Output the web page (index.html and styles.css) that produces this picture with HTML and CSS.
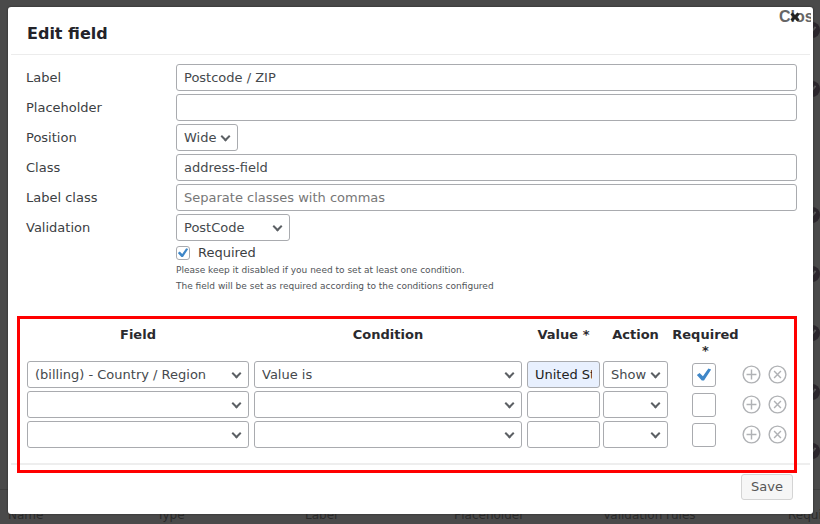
FILE: index.html
```html
<!DOCTYPE html>
<html lang="en">
<head>
<meta charset="utf-8">
<title>Edit field</title>
<meta name="viewport" content="width=device-width, initial-scale=1">
<link rel="stylesheet" href="styles.css">
</head>
<body>
<svg class="defs" aria-hidden="true">
  <symbol id="add" viewBox="0 0 20 20"><circle cx="10" cy="10" r="8.8"/><path d="M10 4.8v10.4M4.8 10h10.4"/></symbol>
  <symbol id="remove" viewBox="0 0 20 20"><circle cx="10" cy="10" r="8.8"/><path d="M6.4 6.4l7.2 7.2M13.6 6.4l-7.2 7.2"/></symbol>
  <symbol id="done" viewBox="0 0 18 18"><circle class="disc" cx="9" cy="9" r="9"/><path class="tick" d="M4.500 9l3 3.500 5.500-7"/></symbol>
</svg>

<div class="backdrop" aria-hidden="true">
  <div class="marks">
    <svg><use href="#done"/></svg>
    <svg><use href="#done"/></svg>
    <svg class="blank"></svg>
    <svg><use href="#done"/></svg>
    <svg><use href="#done"/></svg>
    <svg><use href="#done"/></svg>
    <svg><use href="#done"/></svg>
    <svg><use href="#done"/></svg>
  </div>
  <div class="columns">
    <span>Name</span><span>Type</span><span>Label</span><span>Placeholder</span><span>Validation rules</span><span>Required</span>
  </div>
</div>

<form class="dialog" role="dialog" aria-labelledby="title">
  <header class="dialog-head">
    <h1 id="title">Edit field</h1>
    <button type="button" class="close"><span>Close</span><svg viewBox="0 0 10 10" aria-hidden="true"><path d="M1.500 1.500l7 7M8.500 1.500l-7 7"/></svg></button>
  </header>

  <div class="dialog-body">
    <div class="fields">
      <label for="label">Label</label>
      <input class="control" id="label" type="text" value="Postcode / ZIP">
      <label for="placeholder">Placeholder</label>
      <input class="control" id="placeholder" type="text">
      <label for="position">Position</label>
      <div class="select position"><select class="control" id="position"><option>Wide</option></select></div>
      <label for="class">Class</label>
      <input class="control" id="class" type="text" value="address-field">
      <label for="label-class">Label class</label>
      <input class="control" id="label-class" type="text" placeholder="Separate classes with commas">
      <label for="validation">Validation</label>
      <div class="select validation"><select class="control" id="validation"><option>PostCode</option></select></div>
      <div class="required">
        <label class="check-row"><input class="check" type="checkbox" checked>Required</label>
        <p>Please keep it disabled if you need to set at least one condition.</p>
        <p>The field will be set as required according to the conditions configured</p>
      </div>
    </div>

    <div class="conditions">
      <table>
        <colgroup><col class="c-field"><col class="c-condition"><col class="c-value"><col class="c-action"><col class="c-required"><col class="c-tools"></colgroup>
        <thead>
          <tr><th>Field</th><th>Condition</th><th>Value *</th><th>Action</th><th>Required *</th><td></td></tr>
        </thead>
        <tbody>
          <tr>
            <td><div class="select"><select class="control" aria-label="Field"><option>(billing) - Country / Region</option></select></div></td>
            <td><div class="select"><select class="control" aria-label="Condition"><option>Value is</option></select></div></td>
            <td><input class="control filled" type="text" aria-label="Value" value="United States"></td>
            <td><div class="select"><select class="control" aria-label="Action"><option>Show</option></select></div></td>
            <td class="center"><input class="check large" type="checkbox" aria-label="Required" checked></td>
            <td><div class="tools"><button type="button" aria-label="Add"><svg><use href="#add"/></svg></button><button type="button" aria-label="Remove"><svg><use href="#remove"/></svg></button></div></td>
          </tr>
          <tr>
            <td><div class="select"><select class="control" aria-label="Field"><option></option></select></div></td>
            <td><div class="select"><select class="control" aria-label="Condition"><option></option></select></div></td>
            <td><input class="control" type="text" aria-label="Value"></td>
            <td><div class="select"><select class="control" aria-label="Action"><option></option></select></div></td>
            <td class="center"><input class="check large" type="checkbox" aria-label="Required"></td>
            <td><div class="tools"><button type="button" aria-label="Add"><svg><use href="#add"/></svg></button><button type="button" aria-label="Remove"><svg><use href="#remove"/></svg></button></div></td>
          </tr>
          <tr>
            <td><div class="select"><select class="control" aria-label="Field"><option></option></select></div></td>
            <td><div class="select"><select class="control" aria-label="Condition"><option></option></select></div></td>
            <td><input class="control" type="text" aria-label="Value"></td>
            <td><div class="select"><select class="control" aria-label="Action"><option></option></select></div></td>
            <td class="center"><input class="check large" type="checkbox" aria-label="Required"></td>
            <td><div class="tools"><button type="button" aria-label="Add"><svg><use href="#add"/></svg></button><button type="button" aria-label="Remove"><svg><use href="#remove"/></svg></button></div></td>
          </tr>
        </tbody>
      </table>
    </div>
  </div>

  <footer class="dialog-foot"><button type="submit" class="save">Save</button></footer>
</form>
</body>
</html>
```
FILE: styles.css
```css
*, *::after { box-sizing: border-box; }

body {
  margin: 0;
  padding: 7px 7px 9px 8px;
  background: #4a4a4a;
  color: #3c4043;
  font: 13px/16px "DejaVu Sans", Verdana, sans-serif;
  overflow: hidden;
}

.defs { position: absolute; width: 0; height: 0; }

/* Page dimmed behind the dialog */
.backdrop { position: absolute; inset: 0; overflow: hidden; }
.marks {
  position: absolute;
  top: 22px;
  right: 0;
  display: grid;
  gap: 43px;
}
.marks svg { display: block; width: 16px; height: 16px; }
.marks .blank { height: 24px; }
.disc { fill: #2b262c; }
.tick { fill: none; stroke: #5a5a5a; stroke-width: 2; }
.columns {
  position: absolute;
  top: 489px;
  left: 0;
  right: 0;
  display: grid;
  grid-template-columns: 149fr 148fr 149fr 149fr 185fr 32fr;
  padding: 17px 0 0 8px;
  border-top: 1px solid #3f3f3f;
  color: #2a2a2a;
  font-size: 12px;
  white-space: nowrap;
}
.columns span { min-width: 0; }

.dialog {
  position: relative;
  padding: 0 3px;
  border-radius: 3px;
  background: #fff;
  box-shadow: 0 0 2px #222;
}

.dialog-head {
  display: flex;
  align-items: center;
  height: 48px;
  padding: 6px 16px 0;
  border-bottom: 1px solid #ececec;
}
h1 { margin: 0; color: #23232a; font-size: 16px; line-height: 20px; }

.close {
  position: absolute;
  top: 0;
  right: 2px;
  width: 32px;
  height: 20px;
  padding: 0;
  border: 0;
  overflow: hidden;
  background: none;
  color: #666;
  font: bold 16px/20px "Liberation Sans", Arial, sans-serif;
  text-align: left;
}
.close svg {
  position: absolute;
  top: 5px;
  left: 11px;
  width: 10px;
  height: 10px;
  fill: none;
  stroke: #222;
  stroke-width: 3;
}

.dialog-body { padding: 9px 13px 0 15px; }

.fields {
  display: grid;
  grid-template-columns: 147px 1fr;
  gap: 3px;
  align-items: center;
}

.control {
  display: block;
  width: 100%;
  height: 27px;
  margin: 0;
  padding: 0 7px;
  border: 1px solid #a9abaf;
  border-radius: 3px;
  background: #fff;
  color: #45494d;
  font: inherit;
}
.control::placeholder { color: #777; opacity: 1; }
.filled { background: #e8f0fe; color: #222; }

.select { position: relative; }
.select .control { appearance: none; padding-right: 20px; }
.select::after {
  content: "";
  position: absolute;
  top: 9px;
  right: 9px;
  width: 7px;
  height: 7px;
  border: solid #5c6064;
  border-width: 0 2px 2px 0;
  transform: rotate(45deg);
  pointer-events: none;
}
.position { width: 62px; }
.validation { width: 114px; }

.required { grid-column: 2; }
.check-row { display: flex; align-items: center; gap: 8px; height: 18px; }
.required p { margin: 0; color: #505458; font-size: 9px; }

.check {
  appearance: none;
  flex: none;
  width: 14px;
  height: 14px;
  margin: 0;
  border: 1px solid #a9abaf;
  border-radius: 3px;
  background: #fff center / 16px no-repeat;
}
.check:checked {
  background-image: url("data:image/svg+xml,%3Csvg xmlns='http://www.w3.org/2000/svg' viewBox='0 0 20 20'%3E%3Cpath d='M3.500 10L6 8.200l3 3 5-7.200 2.500 1L10 15H8z' fill='%233f87c8'/%3E%3C/svg%3E");
}
.large { display: inline-block; width: 24px; height: 24px; background-size: 22px; vertical-align: middle; }

/* Highlighted conditions block */
.conditions { position: relative; padding: 33px 7px 12px 1px; }
.conditions::after {
  content: "";
  position: absolute;
  inset: 22px 0 -10px -9px;
  border: 3px solid #f00;
  pointer-events: none;
}
table { width: 100%; border-collapse: collapse; table-layout: fixed; }
.c-field { width: 227px; }
.c-value { width: 76px; }
.c-action { width: 68px; }
.c-required { width: 69px; }
.c-tools { width: 50px; }
th { padding: 0 3px 2px 0; color: #2a2a2e; vertical-align: top; }
th:nth-child(-n+2), td:nth-child(-n+2) { padding-right: 5px; }
th:nth-child(5) { padding-right: 0; }
td { padding: 0 3px 3px 0; }
thead td { padding: 0; }
td.center { text-align: center; }

.tools { display: flex; gap: 7px; padding-left: 2px; }
.tools button { padding: 0; border: 0; background: none; }
.tools svg {
  display: block;
  width: 19px;
  height: 19px;
  fill: none;
  stroke: #b0b2b5;
  stroke-width: 1.5;
}

.dialog-foot {
  display: flex;
  justify-content: flex-end;
  padding: 9px 17px 14px;
  border-top: 2px solid #eee;
}
.save {
  height: 26px;
  padding: 0 9px;
  border: 1px solid #d4d4d4;
  border-radius: 3px;
  background: #f6f6f6;
  color: #555;
  font: inherit;
}
```
